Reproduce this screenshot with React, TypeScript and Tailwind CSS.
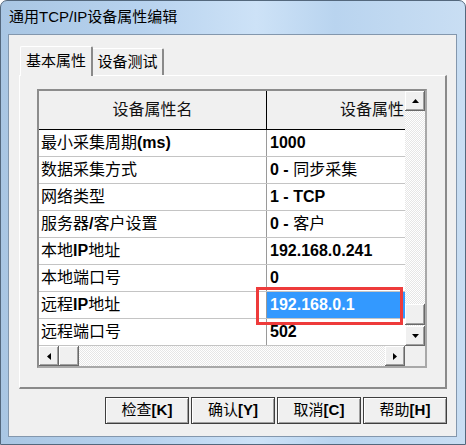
const rows: [string, string][] = [
  ["最小采集周期(ms)", "1000"],
  ["数据采集方式", "0 - 同步采集"],
  ["网络类型", "1 - TCP"],
  ["服务器/客户设置", "0 - 客户"],
  ["本地IP地址", "192.168.0.241"],
  ["本地端口号", "0"],
  ["远程IP地址", "192.168.0.1"],
  ["远程端口号", "502"],
];

const font = { fontFamily: '"Liberation Sans", "Noto Sans CJK SC", sans-serif' };

const raised =
  "bg-[#f0f0f0] shadow-[inset_-1px_-1px_0_#696969,inset_1px_1px_0_#ffffff,inset_-2px_-2px_0_#a0a0a0]";

const track =
  "bg-[image:repeating-conic-gradient(#e6e6e6_0%_25%,#ffffff_0%_50%)] bg-[length:2px_2px]";

// the old dialog font draws latin runs heavier than the chinese ones
const Mixed = ({ text }: { text: string }) => (
  <span className="whitespace-pre">
    {text.split(/([\x21-\x7e]+)/).map((part, i) =>
      /[\x21-\x7e]/.test(part) ? (
        <span key={i} className="font-bold">
          {part}
        </span>
      ) : (
        part
      )
    )}
  </span>
);

const Arrow = ({ dir }: { dir: "up" | "down" | "left" | "right" }) => {
  const pts = {
    up: "0,4 7,4 3.5,0",
    down: "0,0 7,0 3.5,4",
    left: "4,0 4,7 0,3.5",
    right: "0,0 0,7 4,3.5",
  }[dir];
  const vertical = dir === "up" || dir === "down";
  return (
    <svg width={vertical ? 7 : 4} height={vertical ? 4 : 7} viewBox={vertical ? "0 0 7 4" : "0 0 4 7"}>
      <polygon points={pts} fill="#000" />
    </svg>
  );
};

const ScrollBtn = ({ dir }: { dir: "up" | "down" | "left" | "right" }) => (
  <div className={`w-[20px] h-[20px] flex-none flex items-center justify-center ${raised}`}>
    <Arrow dir={dir} />
  </div>
);

const PropertyGrid = () => (
  <div className="w-[390px] h-[279px] border-2 border-t-[#8c8c8c] border-l-[#8c8c8c] border-r-[#a8a8a8] border-b-[#a8a8a8] flex flex-col bg-white">
    <div className="flex h-[255px]">
      {/* cells */}
      <div className="relative w-[366px] overflow-hidden">
        <div className="flex h-[39px] border-b border-black bg-[#f0f0f0] text-[16px] text-[#111]">
          <div className="w-[228px] flex-none border-r border-black flex items-center justify-center">设备属性名</div>
          <div className="w-[138px] flex-none flex items-center pl-[73px] whitespace-nowrap">设备属性</div>
        </div>
        {rows.map(([name, value], i) => {
          const selected = i === 6;
          return (
            <div key={name} className="flex h-[27px] border-b border-[#c4c4c4] text-[16px] text-black">
              <div className="w-[228px] flex-none border-r border-[#9a9a9a] pl-[2px] flex items-center whitespace-nowrap">
                <Mixed text={name} />
              </div>
              <div
                className={`flex-1 pl-[3px] flex items-center whitespace-nowrap ${
                  selected ? "bg-[#3399ff] text-white" : ""
                }`}
              >
                <Mixed text={value} />
              </div>
            </div>
          );
        })}
        {/* highlight annotation */}
        <div className="absolute left-[217px] top-[196px] w-[147px] h-[38px] border-[3px] border-[#ee3b3b]" />
      </div>
      {/* vertical scrollbar */}
      <div className={`w-[20px] flex flex-col ${track}`}>
        <ScrollBtn dir="up" />
        <div className="flex-1" />
        <div className={`h-[21px] ${raised}`} />
        <div className="h-[1px]" />
        <ScrollBtn dir="down" />
      </div>
    </div>
    {/* horizontal scrollbar */}
    <div className="flex h-[20px]">
      <ScrollBtn dir="left" />
      <div className={`w-[20px] h-[20px] ${raised}`} />
      <div className={`flex-1 ${track}`} />
      <ScrollBtn dir="right" />
      <div className="w-[20px] bg-[#f0f0f0]" />
    </div>
  </div>
);

const DialogButton = ({ label }: { label: string }) => (
  <div className="w-[84px] h-[27px] border border-[#3f3f3f] bg-[#f0f0f0] shadow-[inset_1px_1px_0_#ffffff,inset_-1px_-1px_0_#a0a0a0] flex items-center justify-center text-[15px] text-black">
    <Mixed text={label} />
  </div>
);

export default function App() {
  return (
    <div
      className="w-[466px] h-[445px] flex flex-col rounded-t-[7px] border border-[#54687d] bg-[linear-gradient(90deg,#a9c6e3_0%,#b7d2ee_30%,#cde2f7_55%,#b9d4ef_72%,#c9def3_100%)]"
      style={font}
    >
      {/* title bar */}
      <div className="h-[33px] flex-none flex items-center pl-[8px] text-[15px] text-black">
        通用TCP/IP设备属性编辑
      </div>

      {/* client area */}
      <div className="ml-[7px] w-[449px] h-[403px] flex-none border border-[#8397ad] bg-[#f0f0f0] pl-[10px] pt-[12px] flex flex-col">
        {/* tabs */}
        <div className="flex items-end h-[29px] pl-[1px] relative z-10 -mb-[1px]">
          <div className="w-[73px] h-[30px] border-t border-l border-white border-r-2 border-r-[#8a8a8a] rounded-t-[2px] bg-[#f0f0f0] flex items-center justify-center text-[15px] text-black">
            基本属性
          </div>
          <div className="w-[71px] h-[27px] border-t border-white border-r-2 border-r-[#8a8a8a] rounded-tr-[2px] bg-[#f0f0f0] mb-[1px] flex items-center justify-center text-[15px] text-black">
            设备测试
          </div>
        </div>

        {/* tab panel */}
        <div className="w-[428px] h-[314px] flex-none border-t border-l border-white border-r-2 border-b-2 border-r-[#8a8a8a] border-b-[#8a8a8a] pl-[17px] pt-[13px]">
          <PropertyGrid />
        </div>

        {/* buttons */}
        <div className="w-[428px] flex justify-end gap-[2px] mt-[8px]">
          <DialogButton label="检查[K]" />
          <DialogButton label="确认[Y]" />
          <DialogButton label="取消[C]" />
          <DialogButton label="帮助[H]" />
        </div>
      </div>
    </div>
  );
}
